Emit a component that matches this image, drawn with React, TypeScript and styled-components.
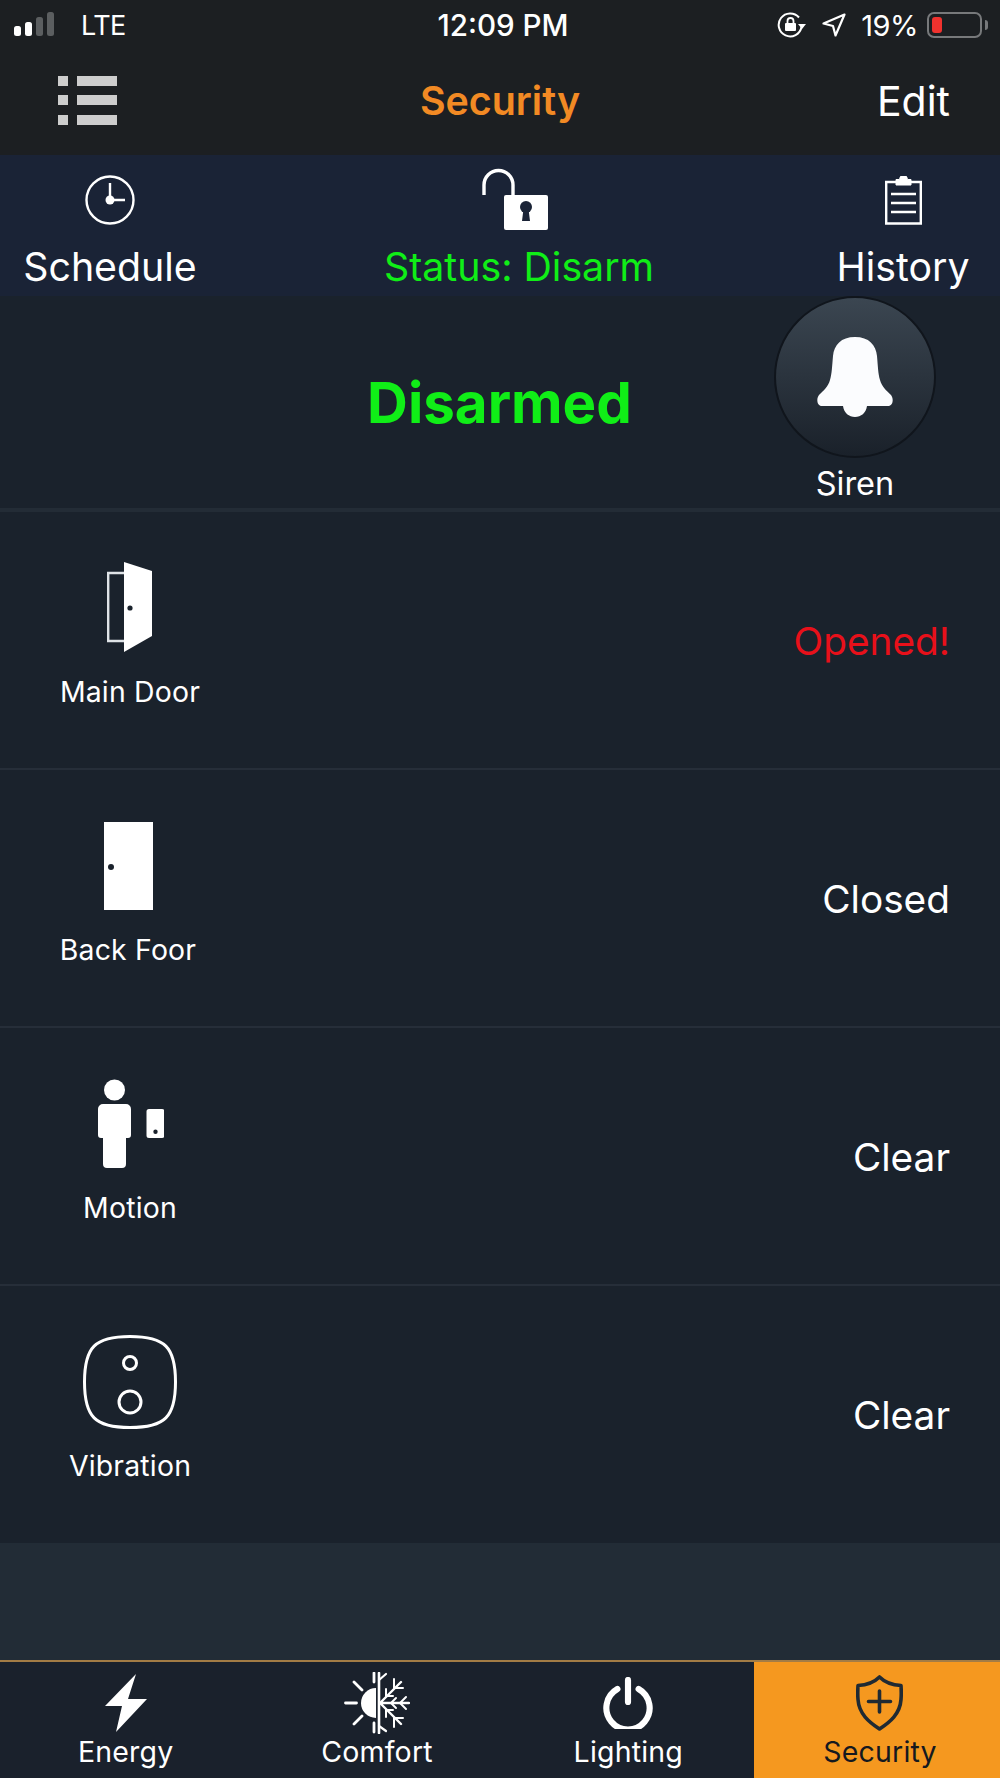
import styled, { createGlobalStyle } from "styled-components";

const GlobalStyle = createGlobalStyle`
    html, body {
        margin: 0;
        padding: 0;
        background-color: #222c36;
        font-family: "Inter", "Liberation Sans", sans-serif;
        -webkit-font-smoothing: antialiased;
    }
    * {
        box-sizing: border-box;
    }
`;

const Page = styled.div`
    width: 1000px;
    height: 1778px;
    display: flex;
    flex-direction: column;
    background-color: #222c36;
    color: #ffffff;
    overflow: hidden;
`;

const Header = styled.div`
    height: 155px;
    flex-shrink: 0;
    background-color: #1c1f22;
`;

const StatusBar = styled.div`
    height: 50px;
    padding: 0 18px 0 14px;
    display: grid;
    grid-template-columns: 1fr auto 1fr;
    align-items: center;
`;

const StatusLeft = styled.div`
    display: flex;
    align-items: center;
    gap: 27px;
    font-size: 27px;
    letter-spacing: -0.5px;
`;

const StatusTime = styled.div`
    font-size: 29.6px;
    font-weight: 500;
    padding-left: 10px;
`;

const StatusRight = styled.div`
    display: flex;
    align-items: center;
    justify-content: flex-end;
    gap: 15px;
    font-size: 29px;
    letter-spacing: -0.5px;
`;

const Battery = styled.div`
    width: 55px;
    height: 26px;
    margin-left: -6px;
    padding: 3px;
    border: 2px solid #77797b;
    border-radius: 7px;
    position: relative;

    &::after {
        content: "";
        position: absolute;
        right: -8px;
        top: 6px;
        width: 3px;
        height: 10px;
        border-radius: 0 3px 3px 0;
        background-color: #77797b;
    }
`;

const BatteryLevel = styled.div`
    height: 100%;
    width: 10px;
    border-radius: 3px;
    background-color: #f0322e;
`;

const NavBar = styled.div`
    height: 105px;
    padding: 0 50px 4px;
    display: grid;
    grid-template-columns: 1fr auto 1fr;
    align-items: center;
`;

const MenuButton = styled.div`
    margin-left: 8px;
    display: flex;
`;

const NavTitle = styled.div`
    font-size: 39.4px;
    font-weight: 600;
    color: #f28a24;
`;

const EditButton = styled.div`
    justify-self: end;
    font-size: 41px;
`;

const ActionBar = styled.div`
    height: 141px;
    flex-shrink: 0;
    background-color: #1a2336;
    display: grid;
    grid-template-columns: 220px 598px 170px;
`;

const ActionItem = styled.div<{ $active?: boolean }>`
    display: flex;
    flex-direction: column;
    align-items: center;
    font-size: 39.3px;
    white-space: nowrap;
    color: ${(p) => (p.$active ? "#10ee17" : "#ffffff")};
`;

const ActionIcon = styled.div<{ $low?: boolean }>`
    height: 88px;
    display: flex;
    align-items: flex-end;
    padding-bottom: ${(p) => (p.$low ? "13px" : "18px")};
    margin-right: ${(p) => (p.$low ? "9px" : "0")};
`;

const Hero = styled.div`
    height: 212px;
    flex-shrink: 0;
    background-color: #1a222c;
    padding-right: 65px;
    display: grid;
    grid-template-columns: 1fr 160px;
    align-items: center;
`;

const HeroTitle = styled.div`
    padding-left: 224px;
    text-align: center;
    font-size: 56.5px;
    font-weight: 700;
    color: #10ee17;
`;

const Siren = styled.div`
    align-self: start;
    display: flex;
    flex-direction: column;
    align-items: center;
    gap: 6px;
    font-size: 32.5px;
    white-space: nowrap;
`;

const SirenButton = styled.div`
    width: 162px;
    height: 162px;
    flex-shrink: 0;
    border-radius: 50%;
    border: 2px solid #10151c;
    background: linear-gradient(#3b4651, #1a212a);
    display: flex;
    align-items: center;
    justify-content: center;
`;

const SensorList = styled.div`
    flex-shrink: 0;
    border-top: 4px solid #232c36;
    background-color: #1a222c;
`;

const SensorRow = styled.div`
    height: 258px;
    padding: 48px 50px 0 0;
    border-bottom: 2px solid #262e39;
    display: flex;
    justify-content: space-between;

    &:last-child {
        height: 257px;
        border-bottom: none;
    }
`;

const SensorInfo = styled.div<{ $narrow?: boolean }>`
    width: ${(p) => (p.$narrow ? "256px" : "260px")};
    display: flex;
    flex-direction: column;
    align-items: center;
    font-size: 28.4px;
    letter-spacing: 0.2px;
`;

const SensorIcon = styled.div`
    height: 96px;
    margin-bottom: 18px;
    display: flex;
    align-items: center;
`;

const SensorState = styled.div<{ $alert?: boolean }>`
    margin-top: 51px;
    font-size: 38.8px;
    line-height: 60px;
    color: ${(p) => (p.$alert ? "#e8101a" : "#ffffff")};
`;

const BottomSpacer = styled.div`
    flex: 1;
`;

const TabBar = styled.div`
    height: 118px;
    flex-shrink: 0;
    border-top: 2px solid #a37c45;
    background-color: #1a212c;
    display: grid;
    grid-template-columns: repeat(3, 1fr) 246px;
`;

const Tab = styled.div<{ $active?: boolean }>`
    display: flex;
    flex-direction: column;
    align-items: center;
    font-size: 28.5px;
    letter-spacing: 0.2px;
    padding-left: ${(p) => (p.$active ? "6px" : "0")};
    background-color: ${(p) => (p.$active ? "#f5981f" : "transparent")};
    color: ${(p) => (p.$active ? "#15191f" : "#ffffff")};
`;

const TabIcon = styled.div`
    height: 72px;
    padding-top: 10px;
    display: flex;
    align-items: center;
`;

const SignalIcon = () => (
    <svg width="40" height="26" viewBox="0 0 40 26">
        <rect x="0" y="14" width="7" height="10" rx="2.5" fill="#fff" />
        <rect x="11" y="10" width="7" height="14" rx="2.5" fill="#fff" />
        <rect x="22" y="5" width="7" height="19" rx="2.5" fill="#5b5e60" />
        <rect x="33" y="0" width="7" height="24" rx="2.5" fill="#5b5e60" />
    </svg>
);

const RotationLockIcon = () => (
    <svg width="30" height="26" viewBox="0 0 30 26" fill="none">
        <path d="M22 5.5A11.5 11.5 0 1 0 24.5 15" stroke="#fff" strokeWidth="2" />
        <path d="M21 12h8l-4 5z" fill="#fff" />
        <rect x="8" y="11" width="11" height="8" rx="1" fill="#fff" />
        <path d="M10.5 11V9a3 3 0 0 1 6 0v2" stroke="#fff" strokeWidth="1.8" />
    </svg>
);

const LocationIcon = () => (
    <svg width="24" height="24" viewBox="0 0 24 24" fill="none">
        <path d="M22.5 1.5 1.5 10.5l9.5 2.5 2.5 9.5z" stroke="#fff" strokeWidth="2.2" strokeLinejoin="round" />
    </svg>
);

const MenuIcon = () => (
    <svg width="59" height="50" viewBox="0 0 59 50" fill="#cdcdcd">
        <rect x="0" y="0" width="10" height="10" />
        <rect x="19" y="0" width="40" height="10" />
        <rect x="0" y="19" width="10" height="10" />
        <rect x="19" y="19" width="40" height="10" />
        <rect x="0" y="39" width="10" height="10" />
        <rect x="19" y="39" width="40" height="10" />
    </svg>
);

const ClockIcon = () => (
    <svg width="50" height="50" viewBox="0 0 50 50" fill="none">
        <circle cx="25" cy="25" r="23.5" stroke="#fff" strokeWidth="2.4" />
        <path d="M25 8v17h15" stroke="#fff" strokeWidth="2.4" />
        <circle cx="25" cy="25" r="4.5" fill="#fff" />
    </svg>
);

const OpenLockIcon = () => (
    <svg width="66" height="62" viewBox="0 0 66 62" fill="none">
        <path d="M2 27V17A14.5 14.5 0 0 1 31 17v13" stroke="#fff" strokeWidth="3.4" />
        <rect x="22" y="27" width="44" height="35" rx="2" fill="#fff" />
        <circle cx="44" cy="39" r="6" fill="#1a2336" />
        <path d="M41.5 41h5l1.5 12h-8z" fill="#1a2336" />
    </svg>
);

const ClipboardIcon = () => (
    <svg width="37" height="49" viewBox="0 0 37 49" fill="none" stroke="#fff">
        <path d="M11 6H1.2v41.5h34.6V6H26" strokeWidth="2.4" />
        <path d="M11 9V3.5h3.5a4 4 0 0 1 8 0H26V9z" fill="#fff" strokeWidth="1" />
        <path d="M6 18h25M6 27h25M6 36h25" strokeWidth="2.6" />
    </svg>
);

const BellIcon = () => (
    <svg width="76" height="80" viewBox="0 0 76 80" fill="#fbfcfe">
        <path d="M38 0C24 0 17 8 16 19C15 30 15 36 13 43C11 50 7 53 2 58C-1 62 0 69 5 69H26C27 76 32 80 38 80C44 80 49 76 50 69H71C76 69 77 62 74 58C69 53 65 50 63 43C61 36 61 30 60 19C59 8 52 0 38 0z" />
    </svg>
);

const OpenDoorIcon = () => (
    <svg width="46" height="92" viewBox="0 0 46 92" fill="none">
        <path d="M18 11H1.2v68H18" stroke="#dfe3e7" strokeWidth="2.4" />
        <path d="M17 0 45 9v65L17 90z" fill="#fff" />
        <circle cx="23" cy="46" r="2.6" fill="#1a222c" />
    </svg>
);

const ClosedDoorIcon = () => (
    <svg width="49" height="88" viewBox="0 0 49 88">
        <rect width="49" height="88" fill="#fff" />
        <circle cx="7" cy="45" r="3" fill="#1a222c" />
    </svg>
);

const MotionIcon = () => (
    <svg width="68" height="90" viewBox="-1 0 68 90" fill="#fff">
        <circle cx="17.5" cy="11" r="10.5" />
        <path d="M6 25h23a5 5 0 0 1 5 5v26a3 3 0 0 1-3 3h-2v26a4 4 0 0 1-4 4H10a4 4 0 0 1-4-4V59H4a3 3 0 0 1-3-3V30a5 5 0 0 1 5-5z" />
        <path fillRule="evenodd" d="M52 30h13a2.5 2.5 0 0 1 2.5 2.500v24A2.500 2.500 0 0 1 65 59H52a2.500 2.500 0 0 1-2.500-2.500v-24A2.500 2.500 0 0 1 52 30zm6.500 20.500a2.200 2.200 0 1 0 0 4.400 2.200 2.200 0 0 0 0-4.400z" />
    </svg>
);

const VibrationIcon = () => (
    <svg width="94" height="94" viewBox="0 0 94 94" fill="none" stroke="#fff">
        <path d="M47 1.5C82 1.5 92.5 12 92.5 47S82 92.5 47 92.5 1.5 82 1.5 47 12 1.5 47 1.5z" strokeWidth="3" />
        <circle cx="47" cy="28" r="6.5" strokeWidth="3" />
        <circle cx="47" cy="67" r="11" strokeWidth="3" />
    </svg>
);

const BoltIcon = () => (
    <svg width="42" height="58" viewBox="0 0 42 58" fill="#fff">
        <path d="M31 0 0 32h17L11 58l31-33H23z" />
    </svg>
);

const ComfortIcon = () => (
    <svg width="66" height="62" viewBox="0 0 66 62" fill="none" stroke="#fff" strokeLinecap="round">
        <path d="M32 16a15 15 0 0 0 0 30z" fill="#fff" stroke="none" />
        <path d="M35 1v60" strokeWidth="2.6" />
        <path d="M30 1v9M30 51v9M1.5 31h11M10 10l8 8M10 52l8-8" strokeWidth="2.8" />
        <path d="M35 8l7-6M35 54l7 5" strokeWidth="2.2" />
        <path d="M36 31l21-21M36 31l21 21M36 31h29" strokeWidth="2.4" />
        <path d="M42 24v-7M42 24h7M50 16V7M50 16h9M42 38v7M42 38h7M50 46v9M50 46h9" strokeWidth="2" />
        <path d="M52 26l-5 5 5 5M62 25l-6 6 6 6" strokeWidth="2" />
    </svg>
);

const PowerIcon = () => (
    <svg width="50" height="52" viewBox="0 0 52 54" fill="none" stroke="#fff" strokeWidth="6.4" strokeLinecap="round">
        <path d="M15 12.5a22.5 22.5 0 1 0 22 0" />
        <path d="M26 3v23" />
    </svg>
);

const ShieldIcon = () => (
    <svg width="47" height="56" viewBox="0 0 47 56" fill="none" stroke="#1f2a33" strokeWidth="3.6" strokeLinejoin="round">
        <path d="M23.5 2c5 5 11 8 21.5 8.5 0 0 .5 8 0 14C44 39 34 47 23.5 54 13 47 3 39 2 24.5c-.5-6 0-14 0-14C12.5 10 18.5 7 23.5 2z" />
        <path d="M23.5 16v21M12.5 26.5h22" strokeLinecap="round" />
    </svg>
);

const sensors = [
    { name: "Main Door", state: "Opened!", alert: true, icon: <OpenDoorIcon /> },
    { name: "Back Foor", state: "Closed", alert: false, narrow: true, icon: <ClosedDoorIcon /> },
    { name: "Motion", state: "Clear", alert: false, icon: <MotionIcon /> },
    { name: "Vibration", state: "Clear", alert: false, icon: <VibrationIcon /> },
];

const tabs = [
    { name: "Energy", icon: <BoltIcon /> },
    { name: "Comfort", icon: <ComfortIcon /> },
    { name: "Lighting", icon: <PowerIcon /> },
    { name: "Security", icon: <ShieldIcon />, active: true },
];

const App = () => {
    return (
        <Page>
            <GlobalStyle />
            <Header>
                <StatusBar>
                    <StatusLeft>
                        <SignalIcon />
                        <span>LTE</span>
                    </StatusLeft>
                    <StatusTime>12:09 PM</StatusTime>
                    <StatusRight>
                        <RotationLockIcon />
                        <LocationIcon />
                        <span>19%</span>
                        <Battery>
                            <BatteryLevel />
                        </Battery>
                    </StatusRight>
                </StatusBar>
                <NavBar>
                    <MenuButton>
                        <MenuIcon />
                    </MenuButton>
                    <NavTitle>Security</NavTitle>
                    <EditButton>Edit</EditButton>
                </NavBar>
            </Header>
            <ActionBar>
                <ActionItem>
                    <ActionIcon><ClockIcon /></ActionIcon>
                    Schedule
                </ActionItem>
                <ActionItem $active>
                    <ActionIcon $low><OpenLockIcon /></ActionIcon>
                    Status: Disarm
                </ActionItem>
                <ActionItem>
                    <ActionIcon><ClipboardIcon /></ActionIcon>
                    History
                </ActionItem>
            </ActionBar>
            <Hero>
                <HeroTitle>Disarmed</HeroTitle>
                <Siren>
                    <SirenButton><BellIcon /></SirenButton>
                    Siren
                </Siren>
            </Hero>
            <SensorList>
                {sensors.map((sensor) => (
                    <SensorRow key={sensor.name}>
                        <SensorInfo $narrow={sensor.narrow}>
                            <SensorIcon>{sensor.icon}</SensorIcon>
                            {sensor.name}
                        </SensorInfo>
                        <SensorState $alert={sensor.alert}>{sensor.state}</SensorState>
                    </SensorRow>
                ))}
            </SensorList>
            <BottomSpacer />
            <TabBar>
                {tabs.map((tab) => (
                    <Tab key={tab.name} $active={tab.active}>
                        <TabIcon>{tab.icon}</TabIcon>
                        {tab.name}
                    </Tab>
                ))}
            </TabBar>
        </Page>
    );
};

export default App;
